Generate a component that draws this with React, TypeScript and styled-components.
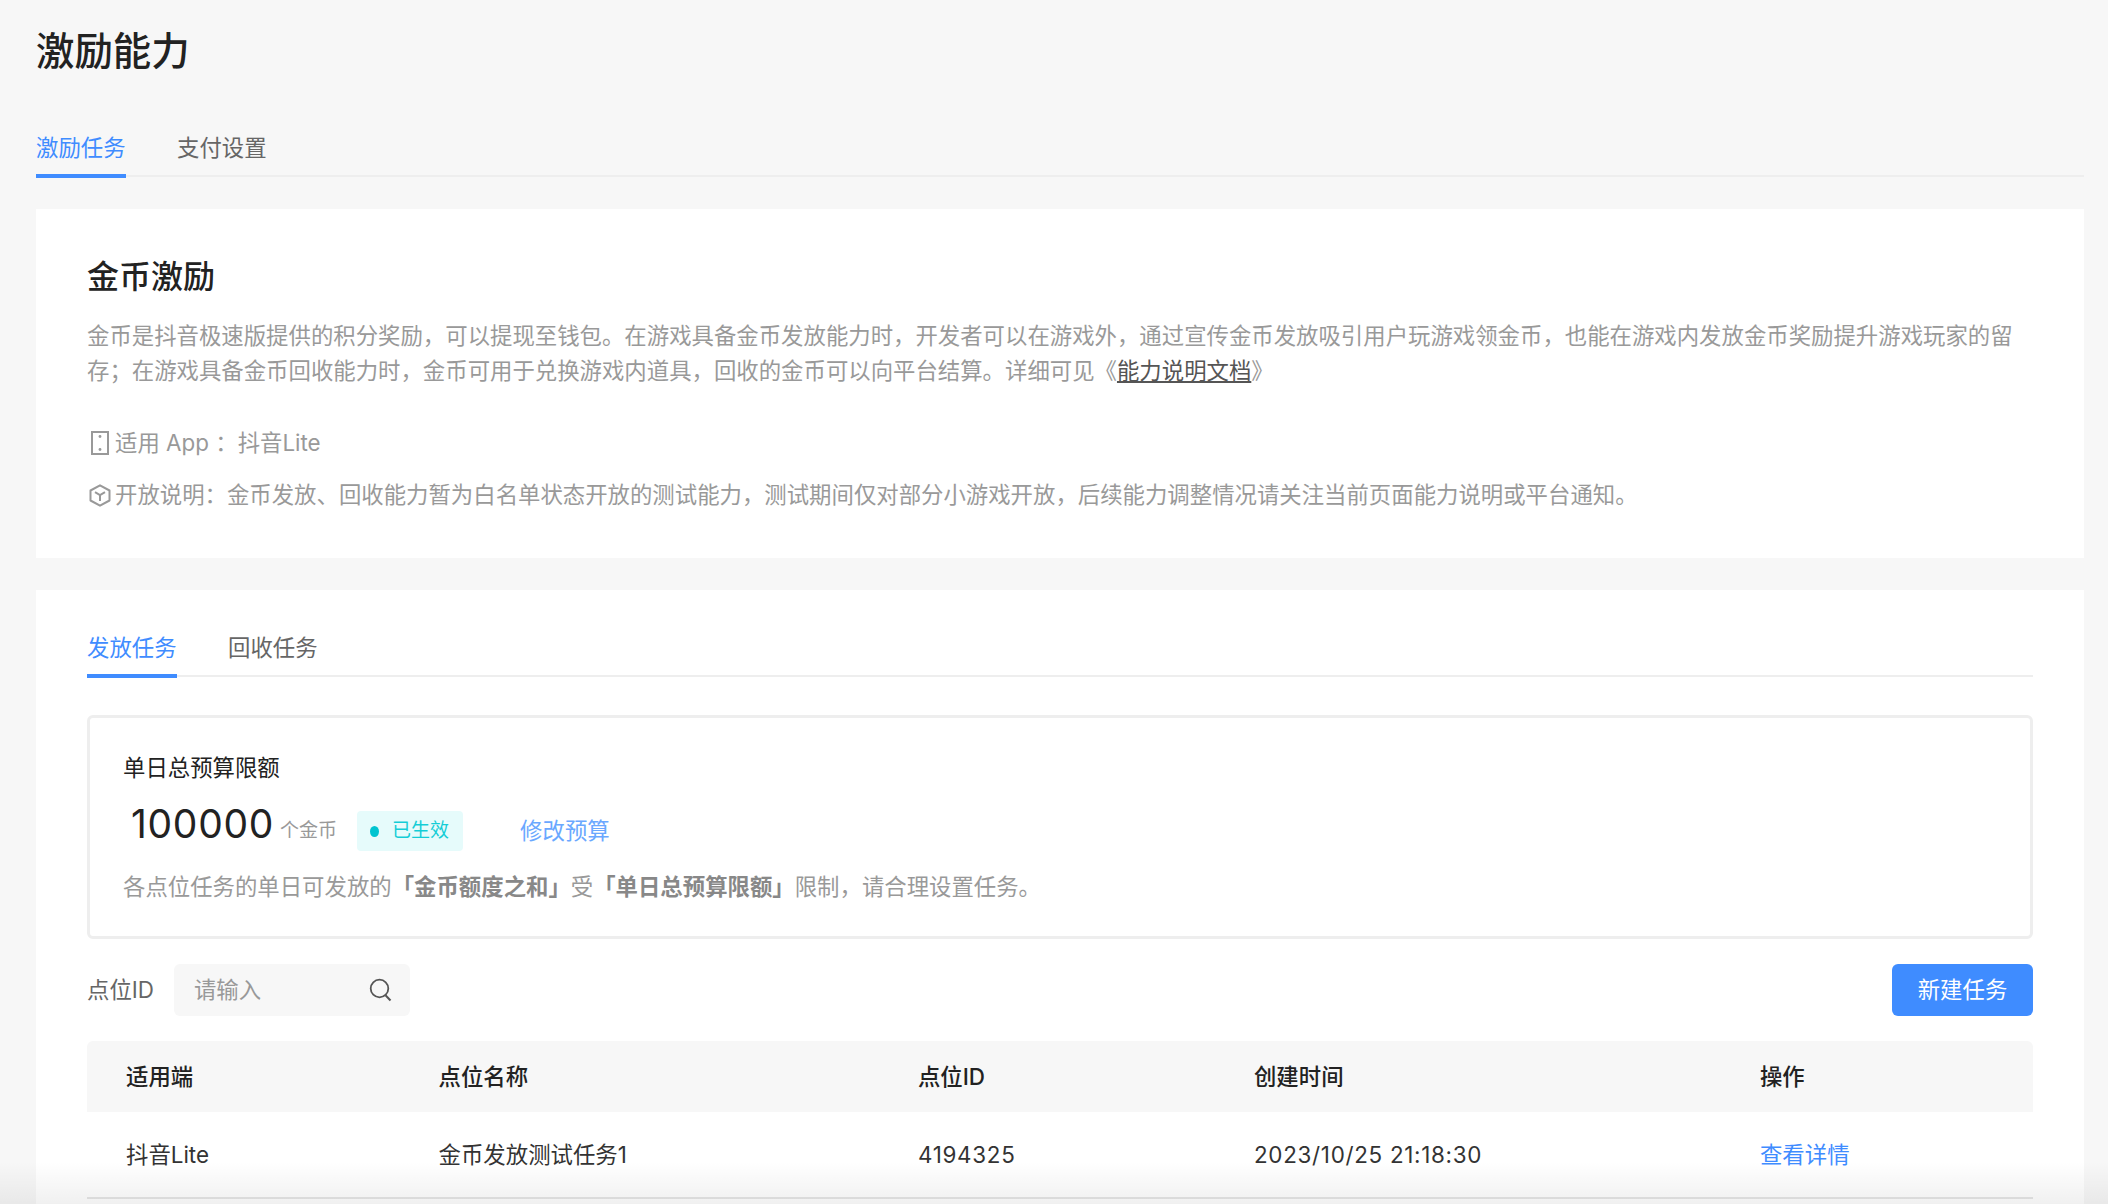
import React from "react";
import styled, { createGlobalStyle } from "styled-components";

const Global = createGlobalStyle`
  html, body { margin: 0; padding: 0; background: #f7f7f7; }
  body { font-family: Inter, "Noto Sans CJK SC", "Liberation Sans", sans-serif; }
  * { box-sizing: border-box; }
`;

const Page = styled.div`
  position: relative;
  width: 2108px;
  height: 1204px;
  overflow: hidden;
  padding: 0 24px 0 36px;
  background: #f7f7f7;
  line-height: 32px;
`;
const Fade = styled.div`
  position: absolute;
  left: 0;
  right: 0;
  bottom: 0;
  height: 42px;
  pointer-events: none;
  background: linear-gradient(to bottom, rgba(0, 0, 0, 0), rgba(0, 0, 0, 0.06));
`;
const Title = styled.h1`
  margin: 0;
  height: 104px;
  line-height: 103px;
  font-size: 38.4px;
  font-weight: 500;
  color: #222;
`;
const TabBar = styled.div`
  position: relative;
  display: flex;
  gap: 51.5px;
  margin-top: ${(p) => p.$top}px;
  &::after {
    content: "";
    position: absolute;
    left: 0;
    right: 0;
    bottom: 1px;
    height: 2px;
    background: #eeeeee;
  }
`;
const Tab = styled.div`
  position: relative;
  z-index: 1;
  height: 60px;
  padding-top: 4px;
  line-height: 52px;
  font-size: 22.4px;
  color: ${(p) => (p.$active ? "#3f8cff" : "#666")};
  border-bottom: 4px solid ${(p) => (p.$active ? "#3f8cff" : "transparent")};
`;
const IntroCard = styled.section`
  height: 349px;
  margin-top: 31px;
  padding: 48px 52px 0 51px;
  background: #fff;
`;
const CardTitle = styled.h2`
  margin: 0;
  line-height: 40px;
  font-size: 32px;
  font-weight: 500;
  color: #222;
`;
const Paragraph = styled.div`
  margin-top: 21px;
  font-size: 22.4px;
  color: #999;
`;
const ParagraphLine = styled.div`
  line-height: 35px;
  white-space: nowrap;
`;
const DocLink = styled.span`
  color: #555;
  text-decoration: underline;
`;
const InfoRow = styled.div`
  display: flex;
  align-items: center;
  gap: 4px;
  height: 36px;
  margin-top: ${(p) => p.$top}px;
  font-size: 22.4px;
  color: #999;
`;
const IconSlot = styled.span`
  display: flex;
  justify-content: center;
  width: 22px;
  margin-left: 2px;
  flex: none;
`;
const TaskCard = styled.section`
  height: 700px;
  margin-top: 32px;
  padding: 28px 51px 0;
  background: #fff;
`;
const BudgetBox = styled.div`
  height: 224px;
  margin-top: 37px;
  padding: 32px 33px 0;
  border: 3px solid #eeeeee;
  border-radius: 6px;
`;
const BudgetLabel = styled.div`
  line-height: 36px;
  font-size: 22.4px;
  color: #222;
`;
const BudgetRow = styled.div`
  display: flex;
  align-items: center;
  height: 40px;
  margin-top: 25px;
`;
const Amount = styled.span`
  margin: 0 0 14px 8px;
  line-height: 40px;
  font-size: 39px;
  font-weight: 400;
  letter-spacing: 0.7px;
  color: #222;
`;
const Unit = styled.span`
  margin-left: 6px;
  font-size: 19px;
  color: #999;
`;
const StatusTag = styled.span`
  display: flex;
  align-items: center;
  gap: 13px;
  height: 40px;
  width: 106px;
  margin-left: 20px;
  padding-left: 13px;
  border-radius: 4px;
  background: #e6fbfb;
  font-size: 19px;
  color: #14cdd6;
`;
const StatusDot = styled.i`
  width: 9px;
  height: 11px;
  border-radius: 50%;
  background: #00c4d0;
`;
const EditLink = styled.span`
  margin-left: 57px;
  font-size: 22.4px;
  color: #6aa8ff;
`;
const BudgetNote = styled.div`
  margin-top: 18px;
  line-height: 36px;
  font-size: 22.4px;
  color: #999;
  b {
    font-weight: 700;
    color: #888;
  }
`;
const FilterRow = styled.div`
  display: flex;
  align-items: center;
  justify-content: space-between;
  height: 52px;
  margin-top: 25px;
`;
const FilterGroup = styled.div`
  display: flex;
  align-items: center;
  gap: 20px;
`;
const FilterLabel = styled.label`
  font-size: 22.4px;
  color: #666;
`;
const SearchBox = styled.div`
  display: flex;
  align-items: center;
  width: 236px;
  height: 52px;
  padding: 0 18px 0 20px;
  border-radius: 6px;
  background: #f7f7f7;
`;
const SearchInput = styled.input`
  flex: 1;
  min-width: 0;
  padding: 0;
  border: 0;
  outline: 0;
  background: transparent;
  font: inherit;
  font-size: 22.4px;
  &::placeholder {
    color: #999;
    opacity: 1;
  }
`;
const PrimaryButton = styled.button`
  width: 141px;
  height: 52px;
  padding: 0;
  border: 0;
  border-radius: 6px;
  background: #3f8cff;
  font: inherit;
  font-size: 22.4px;
  color: #fff;
`;
const columns = "312.6px 479.4px 336px 506px 1fr";
const TableHead = styled.div`
  display: grid;
  grid-template-columns: ${columns};
  align-items: center;
  height: 71px;
  margin-top: 25px;
  padding-left: 39px;
  border-radius: 6px 6px 0 0;
  background: #f7f7f7;
  font-size: 22.4px;
  font-weight: 500;
  color: #222;
`;
const TableRow = styled.div`
  display: grid;
  grid-template-columns: ${columns};
  align-items: center;
  height: 87px;
  padding-left: 39px;
  border-bottom: 2px solid #e6e6e6;
  font-size: 22.4px;
  color: #333;
`;
const NumericCell = styled.span`
  letter-spacing: 0.7px;
`;
const RowLink = styled.span`
  color: #3f8cff;
`;

const PhoneIcon = () => (
  <svg width="18" height="24" viewBox="0 0 18 24" fill="none" aria-hidden="true">
    <rect x="1" y="1" width="16" height="22" stroke="#999" strokeWidth="2" />
    <circle cx="9" cy="5.5" r="1.4" fill="#999" />
    <circle cx="9" cy="18.5" r="1.4" fill="#999" />
  </svg>
);
const CubeIcon = () => (
  <svg width="22" height="23" viewBox="0 0 22 23" fill="none" aria-hidden="true">
    <path
      d="M11 1.3 20.5 6.5v10L11 21.7 1.5 16.5v-10Z"
      stroke="#999"
      strokeWidth="2"
      strokeLinejoin="round"
    />
    <path d="M6 8.2 11 11.2l5-3M11 11.2V17" stroke="#999" strokeWidth="2" />
  </svg>
);
const SearchIcon = () => (
  <svg width="23" height="24" viewBox="0 0 23 24" fill="none" aria-hidden="true">
    <circle cx="10.5" cy="10.5" r="8.8" stroke="#555" strokeWidth="1.8" />
    <path d="M16.5 17.2 21.5 22.5" stroke="#555" strokeWidth="2" />
  </svg>
);

export default function App() {
  return (
    <Page>
      <Global />
      <Title>激励能力</Title>
      <TabBar $top={14}>
        <Tab $active>激励任务</Tab>
        <Tab>支付设置</Tab>
      </TabBar>
      <IntroCard>
        <CardTitle>金币激励</CardTitle>
        <Paragraph>
          <ParagraphLine>
            金币是抖音极速版提供的积分奖励，可以提现至钱包。在游戏具备金币发放能力时，开发者可以在游戏外，通过宣传金币发放吸引用户玩游戏领金币，也能在游戏内发放金币奖励提升游戏玩家的留
          </ParagraphLine>
          <ParagraphLine>
            存；在游戏具备金币回收能力时，金币可用于兑换游戏内道具，回收的金币可以向平台结算。详细可见《
            <DocLink>能力说明文档</DocLink>》
          </ParagraphLine>
        </Paragraph>
        <InfoRow $top={37}>
          <IconSlot>
            <PhoneIcon />
          </IconSlot>
          适用 App ：抖音Lite
        </InfoRow>
        <InfoRow $top={16}>
          <IconSlot>
            <CubeIcon />
          </IconSlot>
          开放说明：金币发放、回收能力暂为白名单状态开放的测试能力，测试期间仅对部分小游戏开放，后续能力调整情况请关注当前页面能力说明或平台通知。
        </InfoRow>
      </IntroCard>
      <TaskCard>
        <TabBar $top={0}>
          <Tab $active>发放任务</Tab>
          <Tab>回收任务</Tab>
        </TabBar>
        <BudgetBox>
          <BudgetLabel>单日总预算限额</BudgetLabel>
          <BudgetRow>
            <Amount>100000</Amount>
            <Unit>个金币</Unit>
            <StatusTag>
              <StatusDot />
              已生效
            </StatusTag>
            <EditLink>修改预算</EditLink>
          </BudgetRow>
          <BudgetNote>
            各点位任务的单日可发放的<b>「金币额度之和」</b>受<b>「单日总预算限额」</b>限制，请合理设置任务。
          </BudgetNote>
        </BudgetBox>
        <FilterRow>
          <FilterGroup>
            <FilterLabel>点位ID</FilterLabel>
            <SearchBox>
              <SearchInput placeholder="请输入" />
              <SearchIcon />
            </SearchBox>
          </FilterGroup>
          <PrimaryButton>新建任务</PrimaryButton>
        </FilterRow>
        <TableHead>
          <span>适用端</span>
          <span>点位名称</span>
          <span>点位ID</span>
          <span>创建时间</span>
          <span>操作</span>
        </TableHead>
        <TableRow>
          <span>抖音Lite</span>
          <span>金币发放测试任务1</span>
          <NumericCell>4194325</NumericCell>
          <NumericCell>2023/10/25 21:18:30</NumericCell>
          <RowLink>查看详情</RowLink>
        </TableRow>
      </TaskCard>
      <Fade />
    </Page>
  );
}
